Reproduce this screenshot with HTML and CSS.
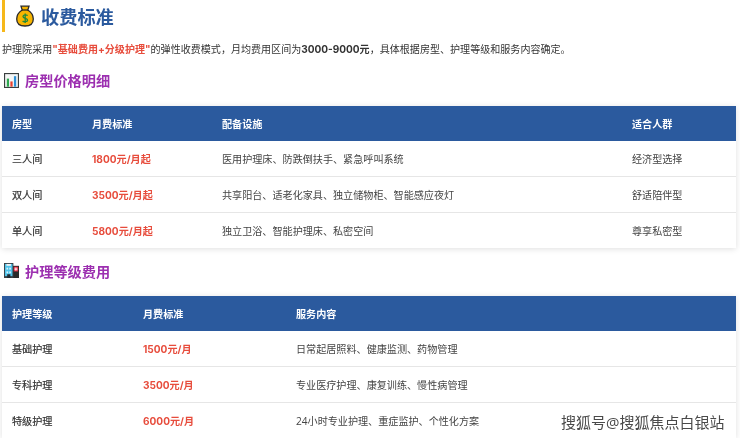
FILE: index.html
```html
<!DOCTYPE html>
<html lang="zh-CN">
<head>
<meta charset="utf-8">
<title>收费标准</title>
<link rel="stylesheet" href="styles.css">
</head>
<body>
<div class="page">
  <h2 class="title">
    <svg class="ico-bag" viewBox="0 0 18 22" aria-hidden="true">
      <path d="M5 1.2 L13 1.2 L11.8 5 C15 7 17.3 10.5 17.3 14 C17.3 18.8 13.8 21 9 21 C4.2 21 .7 18.8 .7 14 C.7 10.5 3 7 6.2 5 Z" fill="#f7b500" stroke="#2b2b2b" stroke-width="1.3"/>
      <path d="M5.8 5 H12.2" stroke="#2b2b2b" stroke-width="1.3"/>
      <path d="M11.6 10.6 C10.8 9.7 7 9.5 7 11.6 C7 13.8 11.6 13 11.6 15.2 C11.6 17.2 7.6 17 6.6 16 M9.2 8.6 V18" fill="none" stroke="#1f8a3a" stroke-width="1.3"/>
    </svg>
    <span>收费标准</span>
  </h2>
  <p class="intro">护理院采用<b class="hl">"基础费用+分级护理"</b>的弹性收费模式，月均费用区间为<b>3000-9000元</b>，具体根据房型、护理等级和服务内容确定。</p>

  <h3 class="sub">
    <svg class="ico" viewBox="0 0 16 16" aria-hidden="true">
      <rect x=".6" y=".6" width="14.8" height="14.8" fill="#f4f6f6" stroke="#3a3f3f" stroke-width="1.2"/>
      <rect x="3" y="6" width="2.4" height="8.6" fill="#2fa84f"/>
      <rect x="6.8" y="9" width="2.4" height="5.6" fill="#e8412f"/>
      <rect x="10.6" y="3.4" width="2.4" height="11.2" fill="#2c8fd6"/>
    </svg>
    <span>房型价格明细</span>
  </h3>
  <table class="grid rooms">
    <thead><tr><th>房型</th><th>月费标准</th><th>配备设施</th><th>适合人群</th></tr></thead>
    <tbody>
      <tr><td class="name">三人间</td><td class="price">1800元/月起</td><td>医用护理床、防跌倒扶手、紧急呼叫系统</td><td>经济型选择</td></tr>
      <tr><td class="name">双人间</td><td class="price">3500元/月起</td><td>共享阳台、适老化家具、独立储物柜、智能感应夜灯</td><td>舒适陪伴型</td></tr>
      <tr><td class="name">单人间</td><td class="price">5800元/月起</td><td>独立卫浴、智能护理床、私密空间</td><td>尊享私密型</td></tr>
    </tbody>
  </table>

  <h3 class="sub second">
    <svg class="ico" viewBox="0 0 16 16" aria-hidden="true">
      <rect x="9" y="3" width="7" height="13" fill="#2a2a2a"/>
      <rect x="0" y="0" width="10" height="16" fill="#3a3f44"/>
      <rect x="1" y="1" width="8" height="13" fill="#4fc3ea"/>
      <rect x="2.6" y="1" width="4.8" height="2" fill="#f0f4f6"/>
      <rect x="2.6" y="5" width="1.8" height="2" fill="#d8f2fb"/>
      <rect x="5.6" y="5" width="1.8" height="2" fill="#d8f2fb"/>
      <rect x="2.6" y="9" width="1.8" height="2" fill="#d8f2fb"/>
      <rect x="5.6" y="9" width="1.8" height="2" fill="#d8f2fb"/>
      <rect x="3.4" y="12" width="3.4" height="4" fill="#1f2a33"/>
      <rect x="10.4" y="4" width="4.6" height="5" fill="#e8344a"/>
      <path d="M12.7 4.8 V8.2 M11.1 6.5 H14.3" stroke="#fff" stroke-width="1"/>
    </svg>
    <span>护理等级费用</span>
  </h3>
  <table class="grid levels">
    <thead><tr><th>护理等级</th><th>月费标准</th><th>服务内容</th></tr></thead>
    <tbody>
      <tr><td class="name">基础护理</td><td class="price">1500元/月</td><td>日常起居照料、健康监测、药物管理</td></tr>
      <tr><td class="name">专科护理</td><td class="price">3500元/月</td><td>专业医疗护理、康复训练、慢性病管理</td></tr>
      <tr><td class="name">特级护理</td><td class="price">6000元/月</td><td>24小时专业护理、重症监护、个性化方案</td></tr>
    </tbody>
  </table>
  <div class="mark">搜狐号@搜狐焦点白银站</div>
</div>
</body>
</html>
```

FILE: styles.css
```css
* { box-sizing: border-box; }
html, body { margin: 0; padding: 0; background: #fff; }
body {
  width: 740px;
  height: 438px;
  overflow: hidden;
  font-family: "Open Sans", "Noto Sans CJK SC", sans-serif;
  color: #333;
}
.page { position: relative; padding: 0 4px 0 2px; height: 438px; overflow: hidden; filter: blur(.3px); }
.title {
  display: flex;
  align-items: center;
  gap: 7px;
  height: 32px;
  margin: 0;
  padding-left: 11px;
  border-left: 3px solid #f6b81a;
  font-family: "Noto Sans CJK SC", sans-serif;
  font-size: 18.2px;
  font-weight: 700;
  line-height: 32px;
  color: #2b5a9e;
}
.ico-bag { width: 18px; height: 22px; flex: none; }
.intro {
  margin: 9px 0 0;
  font-size: 10.05px;
  line-height: 16px;
  color: #333;
  white-space: nowrap;
}
.intro b { font-family: Inter, "Noto Sans CJK SC", sans-serif; font-weight: 700; }
.hl { color: #e74c3c; }
.sub {
  display: flex;
  align-items: center;
  gap: 6px;
  height: 20px;
  margin: 13px 0 0 2px;
  font-size: 14.2px;
  font-weight: 700;
  color: #9c2fb0;
}
.sub.second { margin-top: 13px; }
.ico { width: 15px; height: 15px; flex: none; }
.grid {
  width: 734px;
  margin-top: 16px;
  border-collapse: collapse;
  table-layout: fixed;
  font-size: 10.1px;
  box-shadow: 0 1px 6px rgba(0, 0, 0, .13);
  background: #fff;
}
.levels { margin-top: 15px; }
.grid th {
  height: 35px;
  padding: 0 10px;
  background: #2b5a9e;
  color: #fff;
  font-weight: 700;
  text-align: left;
}
.grid td {
  height: 36px;
  padding: 0 10px;
  border-bottom: 1px solid #e6e6e6;
  color: #444;
}
.rooms td { height: 35.8px; }
.grid tr:last-child td { border-bottom: 0; height: 35px; }
.grid td.name { color: #333; -webkit-text-stroke: .2px #333; }
.grid td.price { font-family: Inter, "Noto Sans CJK SC", sans-serif; font-weight: 700; color: #e74c3c; }
.rooms th:nth-child(1) { width: 80px; }
.rooms th:nth-child(2) { width: 130px; }
.rooms th:nth-child(3) { width: 410px; }
.levels th:nth-child(1) { width: 131px; }
.levels th:nth-child(2) { width: 153px; }
.mark {
  position: absolute;
  left: 561px;
  top: 412px;
  font-size: 15px;
  line-height: 20px;
  white-space: nowrap;
  color: #4a4a4a;
  text-shadow: 0 0 1px #fff;
}
```
